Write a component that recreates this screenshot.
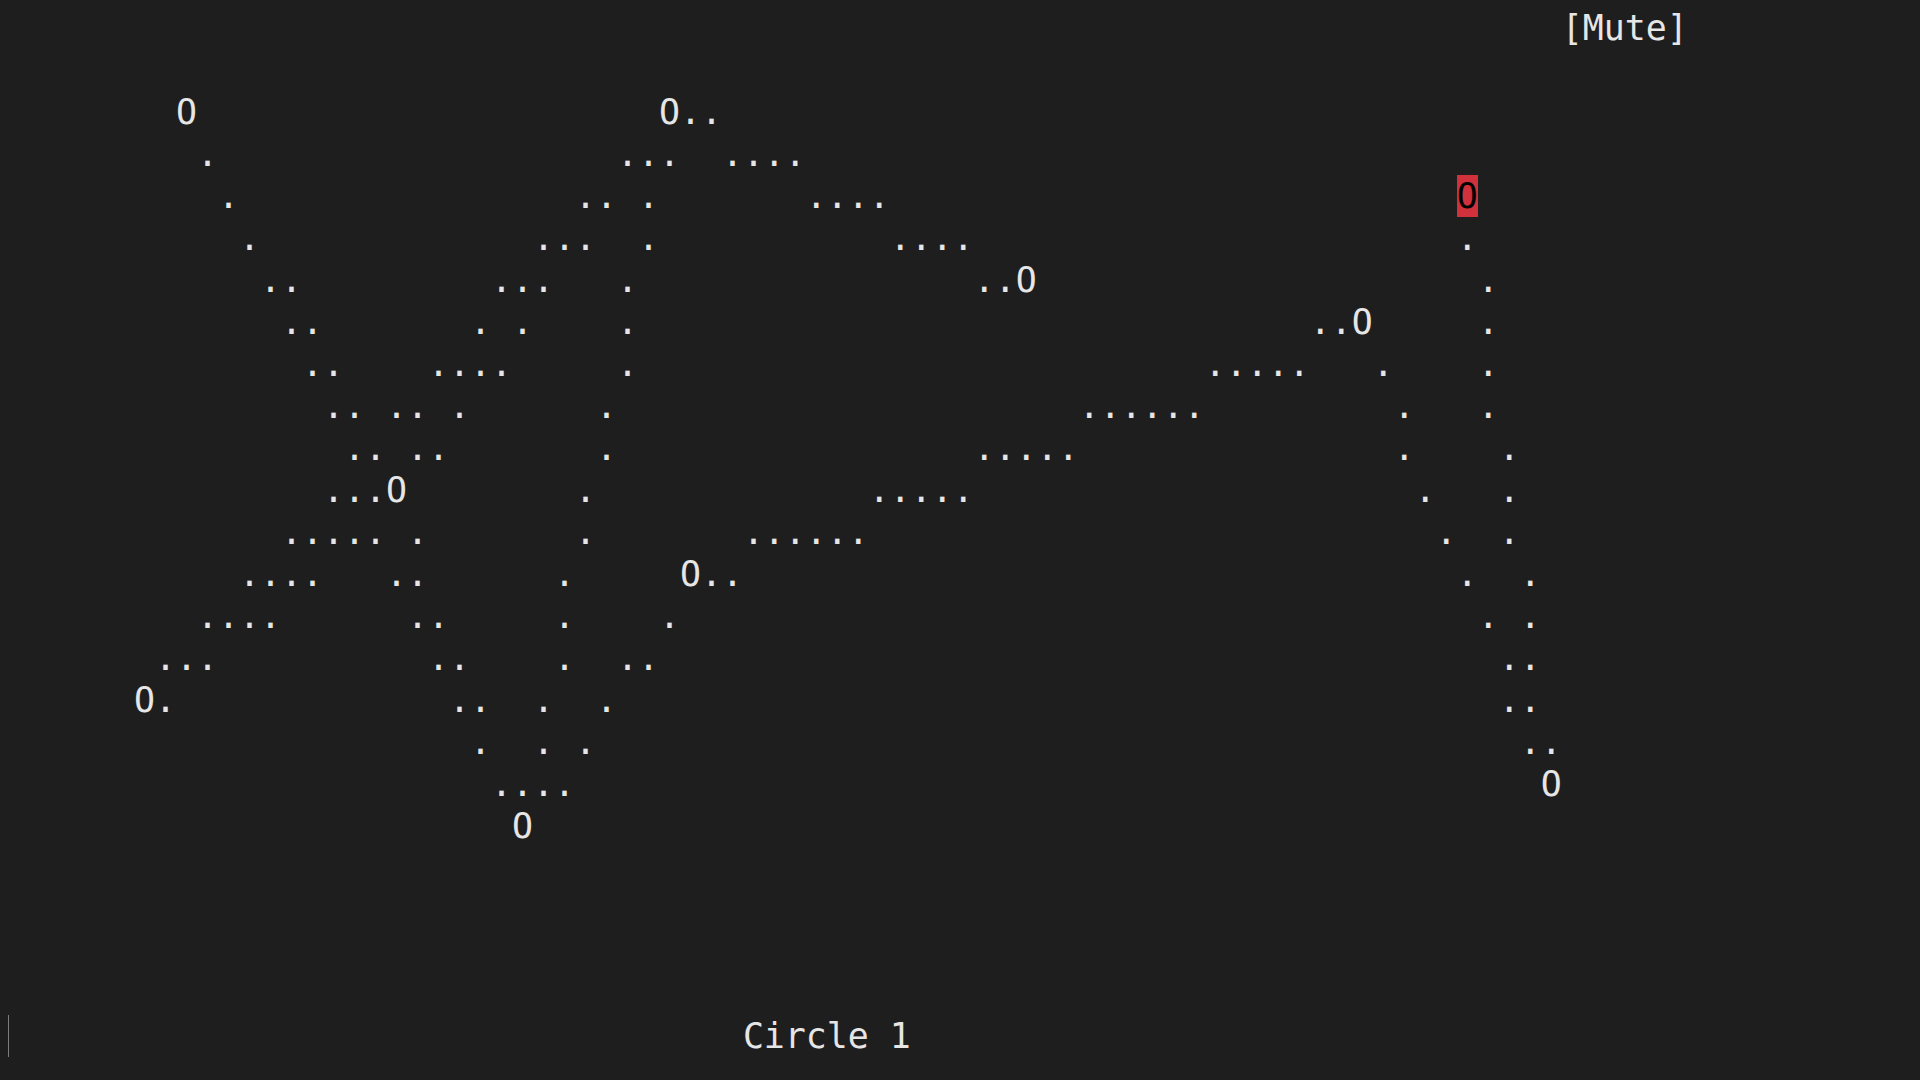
import React from "react";

// one cell = 21px x 42px, 80 columns, 25 rows
type Segment = [number, string];

// "@" marks the highlighted (red) cell
const ROWS: Segment[][] = [
  [[74, "[Mute]"]],
  [],
  [[8, "O"], [31, "O.."]],
  [[9, "."], [29, "..."], [34, "...."]],
  [[10, "."], [27, ".."], [30, "."], [38, "...."], [69, "@"]],
  [[11, "."], [25, "..."], [30, "."], [42, "...."], [69, "."]],
  [[12, ".."], [23, "..."], [29, "."], [46, "..O"], [70, "."]],
  [[13, ".."], [22, "."], [24, "."], [29, "."], [62, "..O"], [70, "."]],
  [[14, ".."], [20, "...."], [29, "."], [57, "....."], [65, "."], [70, "."]],
  [[15, ".."], [18, ".."], [21, "."], [28, "."], [51, "......"], [66, "."], [70, "."]],
  [[16, ".."], [19, ".."], [28, "."], [46, "....."], [66, "."], [71, "."]],
  [[15, "...O"], [27, "."], [41, "....."], [67, "."], [71, "."]],
  [[13, "....."], [19, "."], [27, "."], [35, "......"], [68, "."], [71, "."]],
  [[11, "...."], [18, ".."], [26, "."], [32, "O.."], [69, "."], [72, "."]],
  [[9, "...."], [19, ".."], [26, "."], [31, "."], [70, "."], [72, "."]],
  [[7, "..."], [20, ".."], [26, "."], [29, ".."], [71, ".."]],
  [[6, "O."], [21, ".."], [25, "."], [28, "."], [71, ".."]],
  [[22, "."], [25, "."], [27, "."], [72, ".."]],
  [[23, "...."], [73, "O"]],
  [[24, "O"]],
  [],
  [],
  [],
  [],
  [[35, "Circle 1"]],
];

function buildLine(segments: Segment[]) {
  let line = "";
  for (const [col, text] of segments) {
    line = line.padEnd(col, " ") + text;
  }
  return line;
}

function Line({ segments, cursor }: { segments: Segment[]; cursor?: boolean }) {
  const text = buildLine(segments);
  const parts = text.split("@");

  return (
    <div className="relative h-[42px] whitespace-pre leading-[42px]">
      {cursor && (
        <span className="absolute left-0 top-0 h-[42px] w-px bg-[#7c7c7c]" />
      )}
      {parts.map((part, i) => (
        <React.Fragment key={i}>
          {part}
          {i < parts.length - 1 && (
            <span className="inline-block h-[42px] w-[21px] bg-[#d0313a] text-center align-top text-black">
              O
            </span>
          )}
        </React.Fragment>
      ))}
    </div>
  );
}

export default function App() {
  return (
    <div
      className="h-screen w-full overflow-hidden bg-[#1e1e1e] pl-[8px] pt-[7px] text-[34.88px] text-[#e6e6e6]"
      style={{ fontFamily: '"DejaVu Sans Mono", "Liberation Mono", monospace' }}
    >
      {ROWS.map((segments, i) => (
        <Line key={i} segments={segments} cursor={i === ROWS.length - 1} />
      ))}
    </div>
  );
}
